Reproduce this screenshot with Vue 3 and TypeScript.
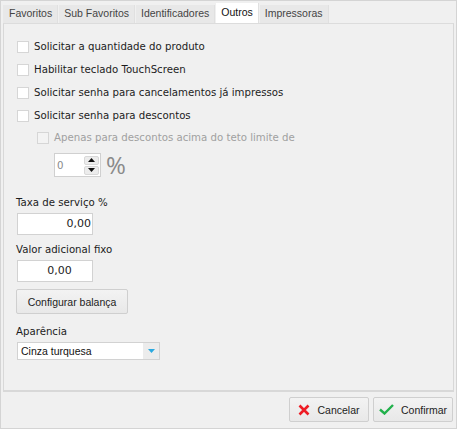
<script setup lang="ts">
const tabs = ['Favoritos', 'Sub Favoritos', 'Identificadores', 'Outros', 'Impressoras']
const checks = [
  'Solicitar a quantidade do produto',
  'Habilitar teclado TouchScreen',
  'Solicitar senha para cancelamentos já impressos',
  'Solicitar senha para descontos',
]
</script>

<template>
  <div class="window">
    <nav class="tabs">
      <span v-for="t in tabs" :key="t" class="tab" :class="{ active: t === 'Outros' }">{{ t }}</span>
    </nav>
    <section class="panel">
      <div class="checks">
        <label v-for="c in checks" :key="c" class="check"><i class="box"></i>{{ c }}</label>
      </div>
      <label class="check sub"><i class="box dim"></i>Apenas para descontos acima do teto limite de</label>
      <div class="limit">
        <div class="spin">
          <span class="spin-value">0</span>
          <span class="arrows">
            <b class="arrow"><svg width="7" height="4" viewBox="0 0 7 4"><path d="M3.5 0 7 4H0z" /></svg></b>
            <b class="arrow"><svg width="7" height="4" viewBox="0 0 7 4"><path d="M0 0h7L3.500 4z" /></svg></b>
          </span>
        </div>
        <span class="pct">%</span>
      </div>
      <div class="field first">Taxa de serviço %</div>
      <div class="money wide">0,00</div>
      <div class="field second">Valor adicional fixo</div>
      <div class="money center">0,00</div>
      <button class="btn scale">Configurar balança</button>
      <div class="field third">Aparência</div>
      <div class="select">
        <span class="select-value">Cinza turquesa</span>
        <span class="drop"><svg width="7" height="4" viewBox="0 0 7 4"><path d="M0 0h7L3.500 4z" /></svg></span>
      </div>
    </section>
    <footer class="footer">
      <button class="btn action cancel">
        <svg width="12" height="12" viewBox="0 0 12 12"><path d="M1.500 1.500l9 9M10.500 1.500l-9 9" stroke="#ee1c25" stroke-width="2.600" fill="none" /></svg>
        Cancelar
      </button>
      <button class="btn action confirm">
        <svg width="15" height="11" viewBox="0 0 15 11"><path d="M1 5.500l4.500 4L14 1" stroke="#22b14c" stroke-width="2.400" fill="none" /></svg>
        Confirmar
      </button>
    </footer>
  </div>
</template>

<style>
html, body { margin: 0; background: #f0f0f0; }
</style>

<style scoped>
.window {
  width: 457px;
  height: 429px;
  box-sizing: border-box;
  background: #f0f0f0;
  border: 1px solid #d4d4d4;
  display: flex;
  flex-direction: column;
  font-family: "DejaVu Sans", sans-serif;
  font-size: 10.200px;
  color: #1c1c1c;
  overflow: hidden;
}
.tabs {
  display: flex;
  height: 20px;
  margin: 2px 2px 0;
  gap: 1px;
  align-items: flex-end;
  font-family: "Liberation Sans", sans-serif;
  font-size: 10.500px;
  color: #444;
}
.tab {
  height: 18px;
  line-height: 17px;
  padding: 0 5px;
  background: #e8e8e8;
  border-right: 1px solid #e0e0e0;
  white-space: nowrap;
}
.tab:first-child { padding-left: 6px; }
.tab.active {
  height: 20px;
  line-height: 18px;
  background: #fff;
  color: #111;
}
.panel {
  flex: 1;
  margin: 0 2px;
  border-top: 1px solid #dcdcdc;
  border-left: 1px solid #d8d8d8;
  border-right: 1px solid #d8d8d8;
  border-bottom: 2px solid #d8d8d8;
  padding: 16px 0 0 12px;
  display: flex;
  flex-direction: column;
  align-items: flex-start;
  min-height: 0;
}
.checks { display: flex; flex-direction: column; gap: 10px; margin-left: 1px; }
.check { display: flex; align-items: center; gap: 5px; height: 13px; white-space: nowrap; }
.box { width: 10px; height: 10px; background: #fff; border: 1px solid #d6d6d6; display: block; }
.sub { margin: 9px 0 0 21px; color: #a0a0a0; }
.box.dim { background: #f3f3f3; }
.limit { display: flex; align-items: center; margin: 9px 0 0 38px; gap: 5px; }
.spin { width: 47px; height: 24px; box-sizing: border-box; background: #fff; border: 1px solid #d0d0d0; display: flex; align-items: center; justify-content: space-between; }
.spin-value { margin-left: 2px; color: #8a8a8a; }
.arrows { display: flex; flex-direction: column; gap: 1px; margin-right: 1px; }
.arrow { width: 15px; height: 9px; background: #ececec; border: 1px solid #d8d8d8; border-radius: 2px; box-sizing: border-box; display: flex; align-items: center; justify-content: center; }
.pct { font-family: "Open Sans", sans-serif; font-size: 24px; line-height: 24px; color: #8a8a8a; }
.field { height: 13px; line-height: 13px; }
.first { margin-top: 19px; }
.second { margin-top: 8px; }
.third { margin-top: 11px; }
.money { width: 76px; height: 22px; box-sizing: border-box; background: #fff; border: 1px solid #d2d2d2; margin: 4px 0 0 1px; font-size: 11px; line-height: 20px; }
.wide { text-align: right; padding-right: 1px; }
.center { text-align: center; padding-left: 9px; }
.btn { font-family: "Liberation Sans", sans-serif; font-size: 10.500px; color: #1c1c1c; background: linear-gradient(#f3f3f3, #e8e8e8); border: 1px solid #cfcfcf; border-radius: 2px; padding: 0; }
.scale { width: 112px; height: 25px; margin-top: 7px; }
.select { width: 143px; height: 18px; box-sizing: border-box; background: #fff; border: 1px solid #d2d2d2; margin: 4px 0 0 1px; display: flex; align-items: stretch; justify-content: space-between; }
.select-value { font-family: "Liberation Sans", sans-serif; font-size: 10.500px; line-height: 16px; padding-left: 3px; color: #111; }
.drop { width: 16px; background: #ececec; display: flex; align-items: center; justify-content: center; }
.drop path { fill: #29a9e0; }
.arrow path { fill: #111; }
.footer { height: 36px; display: flex; justify-content: flex-end; gap: 4px; padding: 5px 3px 0 0; box-sizing: border-box; }
.action { height: 25px; display: flex; align-items: center; justify-content: center; gap: 7px; }
.cancel { width: 80px; }
.confirm { width: 80px; }
</style>
